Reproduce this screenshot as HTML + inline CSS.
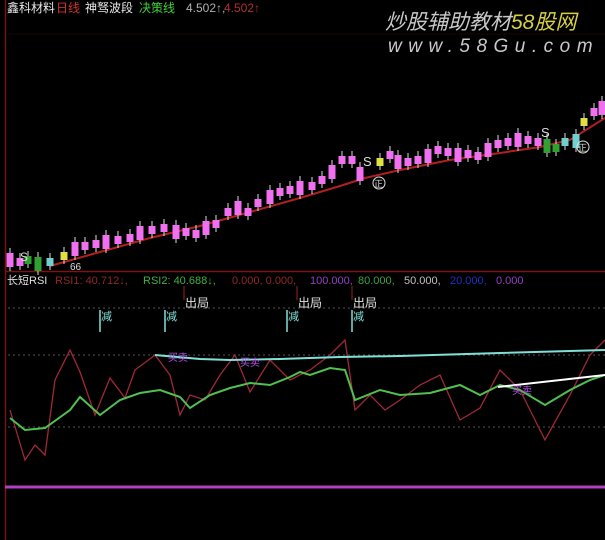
<!DOCTYPE html>
<html><head><meta charset="utf-8"><style>
body{margin:0;background:#000;width:605px;height:540px;overflow:hidden;font-family:"Liberation Sans","Noto Sans CJK SC",sans-serif}
svg{display:block}
</style></head><body>
<svg id="s" width="605" height="540" xmlns="http://www.w3.org/2000/svg" font-family="Liberation Sans, Noto Sans CJK SC, sans-serif">
<rect width="605" height="540" fill="#000"/>
<line x1="5.5" y1="0" x2="5.5" y2="540" stroke="#7a1414" stroke-width="1.5"/>
<line x1="5" y1="271.5" x2="605" y2="271.5" stroke="#7a1414" stroke-width="1.5"/>
<line x1="8" y1="34" x2="605" y2="34" stroke="#1a0606"/>
<g font-size="12">
<text x="7" y="12" fill="#e8e8e8">鑫科材料</text>
<text x="56" y="12" fill="#d03030">日线</text>
<text x="85" y="12" fill="#e8e8e8">神驽波段</text>
<text x="139" y="12" fill="#40d040">决策线</text>
<text x="186" y="12" fill="#b0b0b0">4.502↑,</text>
<text x="224" y="12" fill="#b03030">4.502↑</text>
</g>
<g font-style="italic" font-size="21" fill="#c8c8c8">
<text x="385" y="29">炒股辅助教材<tspan fill="#d8d040">58股网</tspan></text>
<text x="388" y="52" font-size="19" letter-spacing="6.5">www.58Gu.com</text>
</g>
<g font-size="11">
<text x="7" y="284" fill="#e0e0e0">长短RSI</text>
<text x="55" y="284" fill="#902828">RSI1: 40.712↓,</text>
<text x="143" y="284" fill="#40b040">RSI2: 40.688↓,</text>
<text x="232" y="284" fill="#902828">0.000, 0.000,</text>
<text x="310" y="284" fill="#9040c0">100.000,</text>
<text x="358" y="284" fill="#40a040">80.000,</text>
<text x="404" y="284" fill="#c0c0c0">50.000,</text>
<text x="450" y="284" fill="#2030c0">20.000,</text>
<text x="496" y="284" fill="#9040c0">0.000</text>
</g>
<g stroke="#555" stroke-dasharray="2,3">
<line x1="8" y1="308" x2="605" y2="308"/>
<line x1="8" y1="355" x2="605" y2="355"/>
<line x1="8" y1="427" x2="605" y2="427"/>
</g>
<line x1="5" y1="487" x2="605" y2="487" stroke="#b040c0" stroke-width="3"/>
<g id="c"></g>
</svg>
<script>
var s=document.getElementById('c'),h='';
function P(pts,col,w){h+='<polyline fill="none" stroke="'+col+'" stroke-width="'+w+'" points="'+pts.map(function(p){return p.join(',')}).join(' ')+'"/>';}
// MA line
P([[50,266],[100,252],[150,238],[200,226],[250,212],[300,198],[340,186],[365,178],[400,170],[450,160],[500,153],[540,147],[570,140],[605,118]],'#b02020',2);
var C=[[10,260,'#f070f0'],[20,262,'#f070f0'],[28,260,'#30a030'],[38,264,'#30a030'],[50,262,'#70d0d0'],[64,256,'#e0e040'],[75,249,'#f070f0'],[85,246,'#f070f0'],[96,244,'#f070f0'],[106,242,'#f070f0'],[118,240,'#f070f0'],[130,238,'#f070f0'],[140,233,'#f070f0'],[152,230,'#f070f0'],[164,228,'#f070f0'],[176,232,'#f070f0'],[186,232,'#f070f0'],[196,234,'#f070f0'],[206,228,'#f070f0'],[216,224,'#f070f0'],[228,212,'#f070f0'],[238,208,'#f070f0'],[248,212,'#f070f0'],[258,203,'#f070f0'],[270,197,'#f070f0'],[280,192,'#f070f0'],[290,190,'#f070f0'],[300,188,'#f070f0'],[312,186,'#f070f0'],[322,180,'#f070f0'],[332,172,'#f070f0'],[342,160,'#f070f0'],[352,160,'#f070f0'],[360,174,'#f070f0'],[380,162,'#e0e040'],[390,155,'#f070f0'],[398,162,'#f070f0'],[408,162,'#f070f0'],[418,160,'#f070f0'],[428,156,'#f070f0'],[438,150,'#f070f0'],[448,152,'#f070f0'],[458,155,'#f070f0'],[468,154,'#f070f0'],[478,156,'#f070f0'],[488,150,'#f070f0'],[498,144,'#f070f0'],[508,142,'#f070f0'],[518,140,'#f070f0'],[528,140,'#f070f0'],[538,142,'#f070f0'],[547,146,'#30a030'],[556,148,'#30a030'],[565,142,'#70d0d0'],[576,141,'#70d0d0'],[584,122,'#e0e040'],[594,112,'#f070f0'],[602,108,'#f070f0']];
C.forEach(function(c,i){var hh=(i%3==0)?14:8;h+='<line x1="'+c[0]+'" y1="'+(c[1]-hh/2-5)+'" x2="'+c[0]+'" y2="'+(c[1]+hh/2+4)+'" stroke="#ddd" stroke-width="1"/><rect x="'+(c[0]-3.5)+'" y="'+(c[1]-hh/2)+'" width="7" height="'+hh+'" fill="'+c[2]+'"/>';});
// markers
h+='<text x="363" y="166" fill="#ddd" font-size="13">S</text><circle cx="379" cy="183" r="6" fill="none" stroke="#ddd"/><text x="374" y="187" fill="#ddd" font-size="9">正</text>';
h+='<text x="541" y="137" fill="#ddd" font-size="13">S</text><circle cx="583" cy="147" r="6" fill="none" stroke="#ddd"/><text x="578" y="151" fill="#ddd" font-size="9">正</text>';
h+='<text x="20" y="261" fill="#ddd" font-size="12">S</text><text x="70" y="270" fill="#ddd" font-size="10">66</text>';
// RSI lines
P([[10,410],[25,460],[35,445],[45,455],[55,380],[70,350],[80,372],[95,415],[110,378],[125,398],[135,370],[155,355],[170,375],[180,415],[190,395],[205,400],[220,375],[235,355],[250,392],[270,360],[290,380],[310,370],[330,355],[345,340],[355,410],[370,395],[385,410],[400,400],[420,385],[440,375],[460,420],[480,408],[500,370],[520,390],[545,440],[570,395],[590,355],[605,340]],'#a02838',1.3);
P([[10,418],[25,430],[45,428],[70,410],[80,397],[100,415],[120,400],[140,393],[160,390],[180,397],[190,408],[210,395],[230,388],[250,383],[270,385],[290,377],[300,372],[310,375],[330,368],[345,370],[355,400],[380,390],[400,395],[430,393],[460,385],[480,395],[500,385],[520,390],[545,405],[570,390],[590,380],[605,375]],'#50c050',2);
P([[155,355],[200,359],[230,360],[280,359],[340,357],[400,356],[500,353],[605,350]],'#80e0d8',2);
P([[498,387],[605,375]],'#fff',2);
h+='<text x="168" y="361" fill="#b050e0" font-size="10">买卖</text><text x="240" y="366" fill="#b050e0" font-size="10">买卖</text><text x="512" y="394" fill="#b050e0" font-size="10">买卖</text>';
// labels
[[184],[297],[352]].forEach(function(a){h+='<line x1="'+a[0]+'" y1="286" x2="'+a[0]+'" y2="300" stroke="#a02020"/><text x="'+(a[0]+1)+'" y="307" fill="#e0e0e0" font-size="12">出局</text>';});
[100,165,287,352].forEach(function(x){h+='<line x1="'+x+'" y1="310" x2="'+x+'" y2="332" stroke="#80e0d8" stroke-width="1.5"/><text x="'+(x+1)+'" y="320" fill="#80e0d8" font-size="11">减</text>';});
s.innerHTML=h;
</script>
</body></html>
